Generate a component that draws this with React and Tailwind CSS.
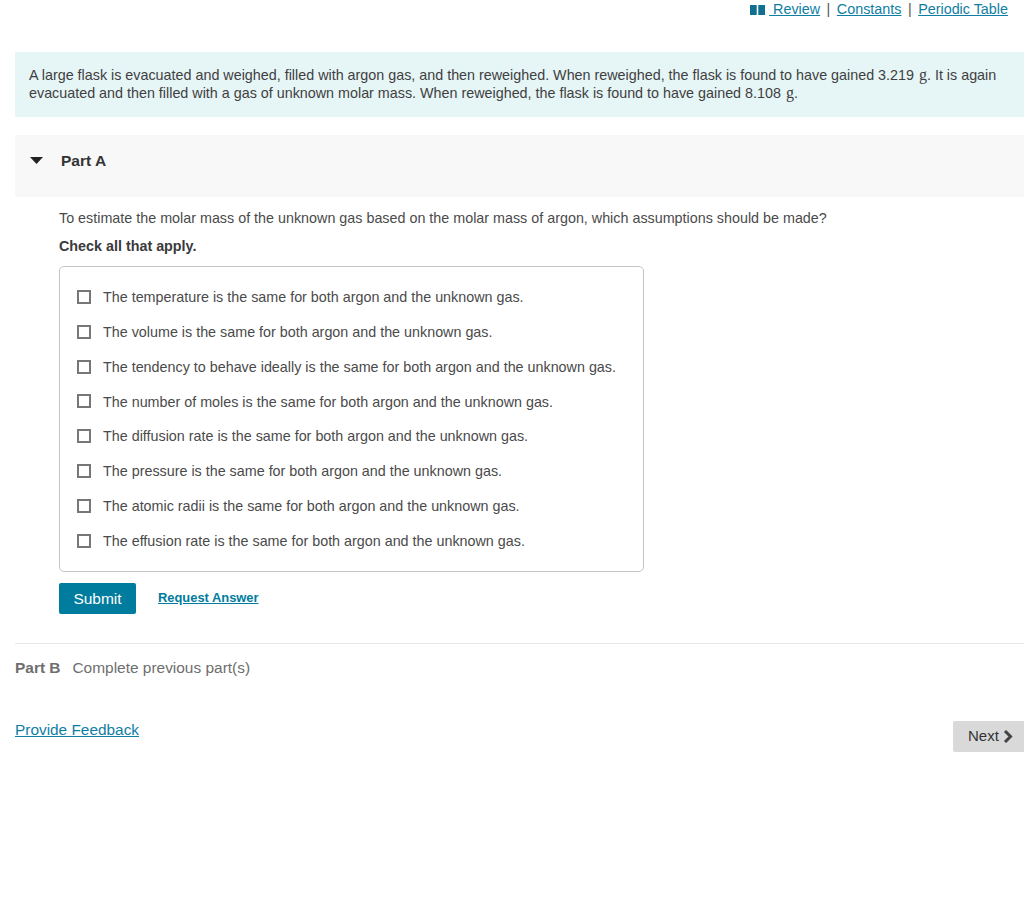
const options = [
  "The temperature is the same for both argon and the unknown gas.",
  "The volume is the same for both argon and the unknown gas.",
  "The tendency to behave ideally is the same for both argon and the unknown gas.",
  "The number of moles is the same for both argon and the unknown gas.",
  "The diffusion rate is the same for both argon and the unknown gas.",
  "The pressure is the same for both argon and the unknown gas.",
  "The atomic radii is the same for both argon and the unknown gas.",
  "The effusion rate is the same for both argon and the unknown gas.",
];

function Book() {
  return (
    <svg width="15" height="10" viewBox="0 0 15 10" className="shrink-0 mr-[-2.5px]">
      <path d="M0 0 H6.7 V10 H0 Z" fill="#0f6f8f" />
      <path d="M8.3 0 H15 V10 H8.3 Z" fill="#0f6f8f" />
    </svg>
  );
}

export default function App() {
  return (
    <div className="w-[1024px] h-[900px] bg-white font-['Liberation_Sans',Arial,sans-serif] text-[14.33px] text-[#4a4a4a] overflow-hidden">
      <div className="h-[20px] pr-4 flex items-center justify-end gap-[6.5px] text-[14.35px] text-[#0f7ea3]">
        <Book />
        <a className="underline whitespace-pre"> Review</a>
        <span className="text-[#555]">|</span>
        <a className="underline">Constants</a>
        <span className="text-[#555]">|</span>
        <a className="underline">Periodic Table</a>
      </div>

      <div className="ml-[15px] mt-[32px] h-[65px] bg-[#e6f5f6] pl-[14px] pr-[20px] pt-[14px] leading-[18px] text-[#3f3f3f]">
        A large flask is evacuated and weighed, filled with argon gas, and then reweighed. When reweighed, the flask is found to have gained 3.219 <span className="font-['Liberation_Serif',serif] text-[16px] ml-[1px]">g</span>. It is again evacuated and then filled with a gas of unknown molar mass. When reweighed, the flask is found to have gained 8.108 <span className="font-['Liberation_Serif',serif] text-[16px] ml-[1px]">g</span>.
      </div>

      <div className="ml-[15px] mt-[18px] h-[62px] bg-[#f8f8f8] flex items-start pt-[16px] pl-[15px]">
        <svg width="13" height="7" viewBox="0 0 13 7" className="mt-[6px]">
          <path d="M0 0H13L6.5 7Z" fill="#222" />
        </svg>
        <span className="ml-[18px] mt-[1px] font-bold text-[15.5px] text-[#333] leading-[18px]">Part A</span>
      </div>

      <div className="ml-[59px] mt-[12px] leading-[18px] text-[#4a4a4a]">
        To estimate the molar mass of the unknown gas based on the molar mass of argon, which assumptions should be made?
      </div>
      <div className="ml-[59px] mt-[10px] leading-[18px] font-bold text-[#3a3a3a]">Check all that apply.</div>

      <div className="ml-[59px] mt-[11px] w-[585px] h-[306px] border border-[#c4c4c4] rounded-[5px] pt-[12.6px] pl-[17px] flex flex-col">
        {options.map((o) => (
          <div key={o} className="h-[34.8px] flex items-center">
            <span className="w-[14px] h-[14px] border-2 border-[#777] bg-white shrink-0" />
            <span className="ml-[12px] mt-[2px] whitespace-nowrap">{o}</span>
          </div>
        ))}
      </div>

      <div className="ml-[59px] mt-[11px] flex items-center">
        <button className="w-[77px] h-[31px] bg-[#007c9e] rounded-[2px] text-white text-[15.5px]">Submit</button>
        <a className="ml-[22px] mb-[1px] text-[12.9px] font-bold underline text-[#007c9e]">Request Answer</a>
      </div>

      <div className="ml-[15px] mt-[29px] border-t border-[#e6e6e6] pt-[15px] leading-[18px] text-[15.45px] text-[#6e6e6e]">
        <span className="font-bold">Part B</span>
        <span className="ml-[12px]">Complete previous part(s)</span>
      </div>

      <div className="ml-[15px] mt-[43px] relative">
        <a className="underline text-[15.4px] text-[#0f7ea3] leading-[18px] inline-block">Provide Feedback</a>
        <div className="absolute right-0 top-[1px] w-[71px] h-[31px] bg-[#d9d9d9] rounded-l-[2px] flex items-center pl-[15px] text-[15px] text-[#333]">
          Next
          <svg width="10" height="13" viewBox="0 0 10 13" className="ml-[4px]">
            <path d="M2 1L7.5 6.5L2 12" fill="none" stroke="#444" strokeWidth="3" />
          </svg>
        </div>
      </div>
    </div>
  );
}
